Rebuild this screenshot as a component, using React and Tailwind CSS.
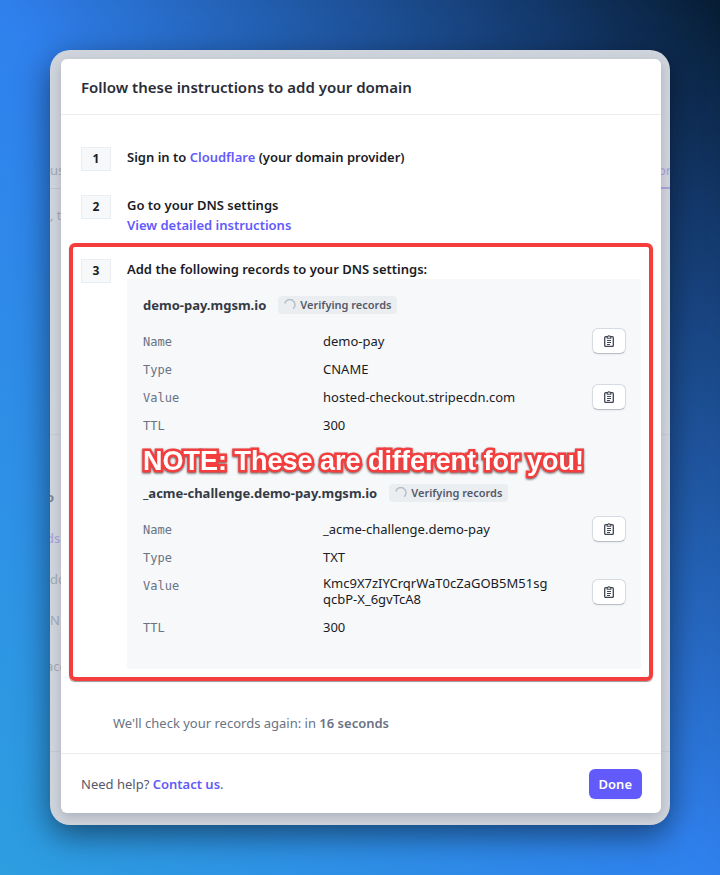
import React from "react";

function CopyIcon() {
  return (
    <svg width="12" height="12" viewBox="0 0 12 12" fill="none" aria-hidden="true">
      <path d="M4 1.700H2.700c-.6 0-1 .4-1 1v7.700c0 .6.4 1 1 1h6.600c.6 0 1-.4 1-1V2.700c0-.6-.4-1-1-1H8" stroke="#414552" strokeWidth="1.300" />
      <path d="M4.200 1.500h.6a1.250 1.100 0 0 1 2.400 0h.6v1.700H4.200z" stroke="#414552" strokeWidth="1.100" strokeLinejoin="round" />
      <path d="M4 5.500h4M4 7.500h4M4 9.500h3" stroke="#414552" strokeWidth="1" />
    </svg>
  );
}

function CopyButton({ label }) {
  return (
    <button
      type="button"
      aria-label={label}
      className="flex h-[26px] w-[34px] items-center justify-center rounded-md border border-[#d5dbe1] border-b-[#b9bec6] bg-white shadow-xs"
    >
      <CopyIcon />
    </button>
  );
}

function Verifying() {
  return (
    <span className="flex h-[18px] items-center gap-1 rounded bg-[#ebeef1] px-1.5 text-[11px] font-semibold text-[#545969]">
      <svg width="12" height="12" viewBox="0 0 12 12" fill="none" aria-hidden="true">
        <path d="M.8 4.500A5.200 5.200 0 1 1 9.200 9.700" stroke="#b6bcc7" strokeWidth="1.400" />
      </svg>
      Verifying records
    </span>
  );
}

function Row({ name, children, copy, tall }) {
  return (
    <div className={"grid grid-cols-[180px_1fr_34px] grid-rows-1 " + (tall ? "h-[42px]" : "h-7")}>
      <dt className="pt-px font-['DejaVu_Sans_Mono',monospace] text-xs leading-7 text-[#6a7383]">{name}</dt>
      <dd className={tall ? "w-[230px] py-1 leading-4 break-all" : "leading-7"}>{children}</dd>
      {copy && (
        <dd className="flex items-center">
          <CopyButton label={"Copy " + name} />
        </dd>
      )}
    </div>
  );
}

function RecordTitle({ children }) {
  return (
    <div className="flex h-5 items-center gap-3">
      <h3 className="font-bold text-[#353a44]">{children}</h3>
      <Verifying />
    </div>
  );
}

function StepNumber({ children }) {
  return (
    <span className="flex h-6 w-[30px] shrink-0 items-center justify-center border border-[#ebeef1] bg-[#f6f8fa] text-xs font-bold">
      {children}
    </span>
  );
}

function Backdrop() {
  return (
    <div aria-hidden="true" className="absolute inset-0 text-[13px] leading-5 text-[#a3a9b4]">
      <div className="flex h-[139px] items-end justify-between border-b border-[#c0c5ce] pb-2">
        <span>us</span>
        <span className="-mr-1 font-medium text-[#a9a5dc]">on</span>
      </div>
      <div className="-mt-0.5 ml-auto h-0.5 w-3 bg-[#a9a5dc]" />
      <p className="mt-4">, t</p>
      <div className="mt-[209px] border-t border-[#c6cbd3]" />
      <p className="-ml-1 mt-[52px] font-bold text-[#7d8390]">o</p>
      <p className="-ml-1 mt-[21px] font-medium text-[#a9a5dc]">ds</p>
      <p className="mt-[21px]">dc</p>
      <p className="mt-[21px]">N</p>
      <p className="-ml-1 mt-[26px]">ace</p>
      <div className="mt-[75px] border-t border-[#c6cbd3]" />
    </div>
  );
}

export default function App() {
  return (
    <main className="min-h-screen bg-[linear-gradient(to_bottom_left,#071c33_0%,#143a6e_14%,#1d5096_25%,#2f80ed_50%,#2d9ee0_100%)] p-[50px] font-['Noto_Sans',sans-serif] text-[13px] leading-5 text-[#1a1b25]">
      <div className="relative rounded-[20px] bg-[#d0d5dd] shadow-[0_10px_32px_rgba(0,0,0,0.5)]">
        <div className="absolute inset-0 overflow-hidden rounded-[20px]">
          <Backdrop />
        </div>
        <div className="pt-[9px] pr-[9px] pb-3 pl-[11px]">
          <section className="relative rounded-md bg-white shadow-[0_4px_12px_rgba(60,66,87,0.25)]">
            <header className="flex h-14 items-center border-b border-[#ebeef1] px-5">
              <h1 className="text-[15px] font-semibold text-[#2a2d38]">Follow these instructions to add your domain</h1>
            </header>

            <ol className="px-2">
              <li className="flex gap-4 px-3 pt-8">
                <StepNumber>1</StepNumber>
                <p className="font-semibold">
                  Sign in to <a href="#cloudflare" className="text-[#625afa]">Cloudflare</a> (your domain provider)
                </p>
              </li>
              <li className="flex gap-4 px-3 pt-6">
                <StepNumber>2</StepNumber>
                <div className="font-semibold">
                  <p>Go to your DNS settings</p>
                  <a href="#instructions" className="block text-[#625afa]">View detailed instructions</a>
                </div>
              </li>
              <li className="mt-2 flex gap-4 rounded-md border-4 border-[#f43d3d] p-2 pt-3 shadow-[0_1px_1px_rgba(0,0,0,0.4)]">
                <StepNumber>3</StepNumber>
                <div className="min-w-0 flex-1">
                  <p className="font-semibold">Add the following records to your DNS settings:</p>
                  <div className="bg-[#f6f8fa] pt-4 pr-[15px] pb-7 pl-4">
                    <RecordTitle>demo-pay.mgsm.io</RecordTitle>
                    <dl className="mt-3">
                      <Row name="Name" copy>demo-pay</Row>
                      <Row name="Type">CNAME</Row>
                      <Row name="Value" copy>hosted-checkout.stripecdn.com</Row>
                      <Row name="TTL">300</Row>
                    </dl>
                    <p className="h-11 font-['Liberation_Sans',sans-serif] text-[27px] leading-[44px] font-bold whitespace-nowrap text-white [paint-order:stroke_fill] [-webkit-text-stroke:5px_#f43d3d] drop-shadow-[0_1px_1px_rgba(0,0,0,0.6)]">
                      NOTE: These are different for you!
                    </p>
                    <RecordTitle>_acme-challenge.demo-pay.mgsm.io</RecordTitle>
                    <dl className="mt-3">
                      <Row name="Name" copy>_acme-challenge.demo-pay</Row>
                      <Row name="Type">TXT</Row>
                      <Row name="Value" copy tall>Kmc9X7zIYCrqrWaT0cZaGOB5M51sgqcbP-X_6gvTcA8</Row>
                      <Row name="TTL">300</Row>
                    </dl>
                  </div>
                </div>
              </li>
            </ol>

            <p className="px-[52px] pt-8 pb-5 text-[#6a7383]">
              We'll check your records again: in <strong className="font-semibold">16 seconds</strong>
            </p>

            <footer className="flex h-[60px] items-center justify-between border-t border-[#ebeef1] pr-[19px] pl-5">
              <p className="text-[#545969]">
                Need help? <a href="#contact" className="font-semibold text-[#625afa]">Contact us</a>.
              </p>
              <button type="button" className="h-[30px] rounded-md bg-[#625afa] px-2.5 font-semibold text-white shadow-xs">
                Done
              </button>
            </footer>
          </section>
        </div>
      </div>
    </main>
  );
}
